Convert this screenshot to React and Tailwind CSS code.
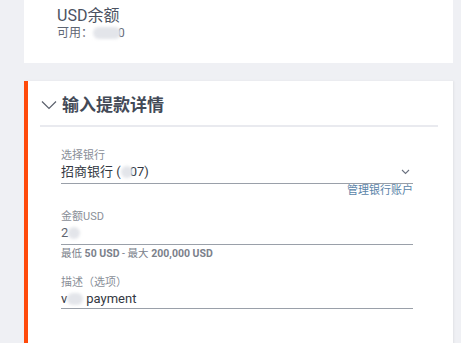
import React from "react";

const Blob = ({ w = 22 }) => (
  <span
    className="inline-block h-[12px] rounded-full bg-[#e3e5ea] blur-[1.5px] align-middle"
    style={{ width: w }}
  />
);

export default function App() {
  return (
    <div
      className="w-[461px] h-[343px] overflow-hidden bg-[#eff0f4] text-[#3d4350]"
      style={{ fontFamily: 'Roboto, "Noto Sans CJK SC", sans-serif' }}
    >
      {/* Balance card */}
      <div className="ml-[24px] w-[429px] h-[63px] bg-white pl-[33px] pt-[6px]">
        <div className="text-[16px] leading-[20px] text-[#4b5261]">USD余额</div>
        <div className="text-[12px] leading-[14px] text-[#5f6673] flex items-center">
          <span>可用：</span>
          <Blob w={28} />
          <span className="-ml-[3px]">0</span>
        </div>
      </div>

      {/* Withdrawal details card */}
      <div className="mt-[18px] ml-[24px] w-[429px] bg-white border-l-[4px] border-[#ff4a0a] shadow-[1px_0_2px_rgba(0,0,0,0.06)] pt-[12px] pb-[40px]">
        <div className="flex items-center h-[24px] pl-[13px]">
          <svg width="16" height="10" viewBox="0 0 16 10" className="mr-[5px]">
            <polyline
              points="1,1.5 8,8.5 15,1.5"
              fill="none"
              stroke="#5a606c"
              strokeWidth="1.2"
            />
          </svg>
          <span className="text-[17px] leading-[24px] font-bold text-[#434a57]">输入提款详情</span>
        </div>
        <div className="mt-[8px] ml-[12px] w-[398px] h-[2px] bg-[#e9eaef]" />

        <div className="pl-[33px] w-[385px]">
          {/* Bank select */}
          <div className="mt-[22px] border-b-[1.5px] border-[#9aa0a9] pb-[2px]">
            <div className="text-[11px] leading-[14px] text-[#8a8f98]">选择银行</div>
            <div className="flex items-center justify-between h-[18px]">
              <span className="text-[13px] leading-[18px] text-[#333842] flex items-center">
                招商银行 (<Blob w={12} /><span className="-ml-[3px]">07)</span>
              </span>
              <svg width="9" height="6" viewBox="0 0 9 6" className="mr-[3px] -mt-[1px]">
                <polyline points="1,1 4.5,4.5 8,1" fill="none" stroke="#6b7280" strokeWidth="1.1" />
              </svg>
            </div>
          </div>
          <div className="text-right text-[11px] leading-[14px] text-[#5b84a8]">管理银行账户</div>

          {/* Amount */}
          <div className="mt-[12px] border-b-[1.5px] border-[#9aa0a9] pb-[2px]">
            <div className="text-[11px] leading-[14px] text-[#8a8f98]">金额USD</div>
            <div className="h-[18px] text-[13px] leading-[18px] text-[#5c626d] flex items-center">
              <span>2</span>
              <Blob w={12} />
            </div>
          </div>
          <div className="mt-[2px] text-[10.5px] leading-[14px] text-[#7b818b]">
            最低 <span className="font-bold">50 USD</span> - 最大{" "}
            <span className="font-bold">200,000 USD</span>
          </div>

          {/* Description */}
          <div className="mt-[15px] border-b-[1.5px] border-[#9aa0a9]">
            <div className="text-[11px] leading-[14px] text-[#8a8f98]">描述（选项）</div>
            <div className="h-[18px] text-[13px] leading-[18px] text-[#333842] flex items-center">
              <span>v</span>
              <Blob w={16} />
              <span className="ml-[3px]">payment</span>
            </div>
          </div>
        </div>
      </div>
    </div>
  );
}
